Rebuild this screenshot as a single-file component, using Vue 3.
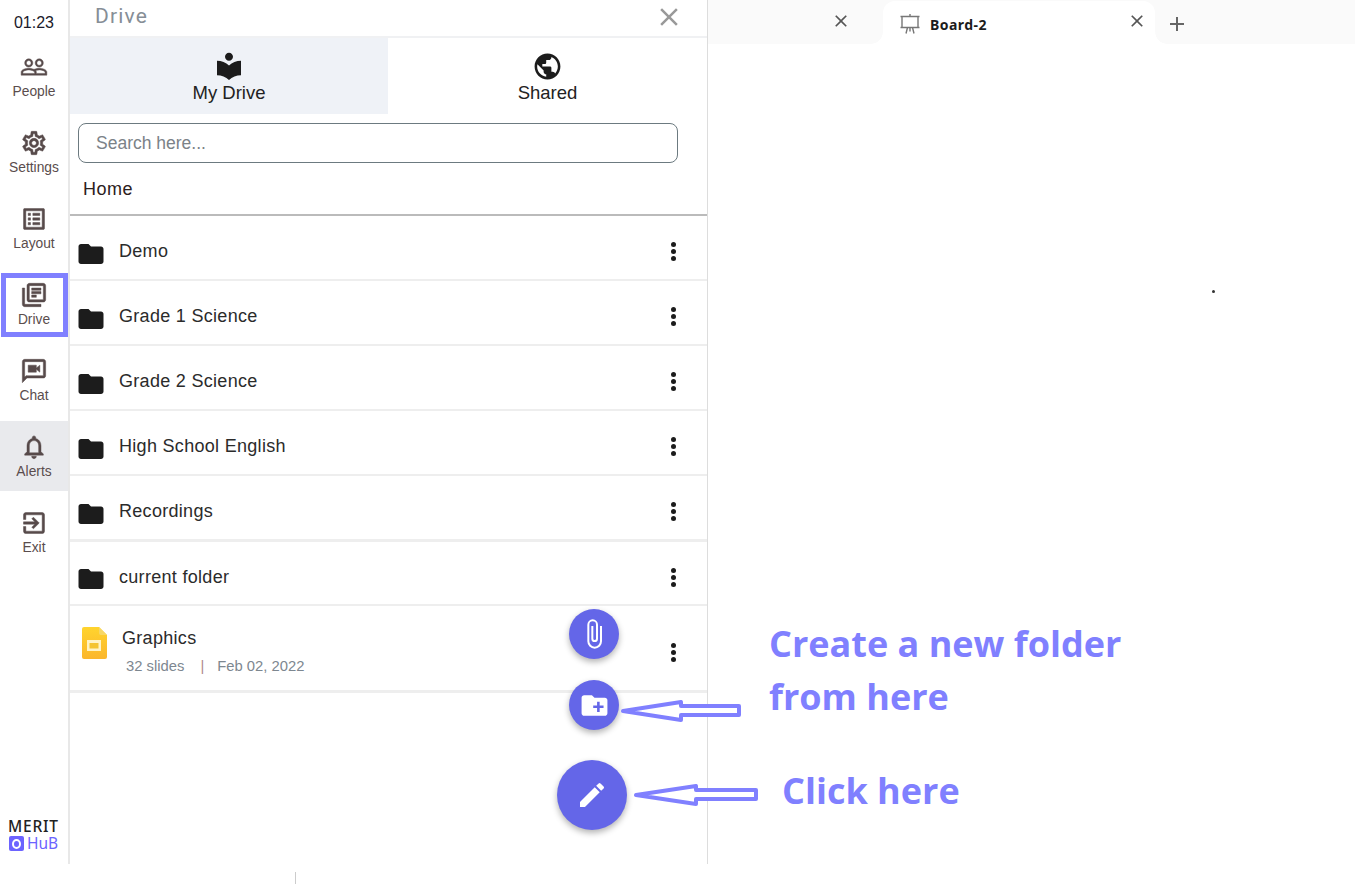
<script setup>
const nav = [
  { label: 'People', d: 'M16.5 13c-1.2 0-3.07.34-4.5 1-1.43-.67-3.3-1-4.5-1C5.33 13 1 14.08 1 16.25V19h22v-2.75c0-2.17-4.33-3.25-6.5-3.25zm-4 4.5h-10v-1.25c0-.54 2.56-1.75 5-1.75s5 1.21 5 1.75v1.25zm9 0H14v-1.25c0-.46-.2-.86-.52-1.22.88-.3 1.96-.53 3.02-.53 2.44 0 5 1.21 5 1.75v1.25zM7.5 12c1.93 0 3.5-1.57 3.5-3.5S9.43 5 7.5 5 4 6.57 4 8.5 5.57 12 7.5 12zm0-5.5c1.1 0 2 .9 2 2s-.9 2-2 2-2-.9-2-2 .9-2 2-2zm9 5.5c1.93 0 3.5-1.57 3.5-3.5S18.43 5 16.5 5 13 6.57 13 8.5s1.57 3.5 3.5 3.5zm0-5.5c1.1 0 2 .9 2 2s-.9 2-2 2-2-.9-2-2 .9-2 2-2z' },
  { label: 'Settings', d: 'M19.43 12.98c.04-.32.07-.64.07-.98 0-.34-.03-.66-.07-.98l2.11-1.65c.19-.15.24-.42.12-.64l-2-3.46c-.09-.16-.26-.25-.44-.25-.06 0-.12.01-.17.03l-2.49 1c-.52-.4-1.08-.73-1.69-.98l-.38-2.65C14.46 2.18 14.25 2 14 2h-4c-.25 0-.46.18-.49.42l-.38 2.65c-.61.25-1.17.59-1.69.98l-2.49-1c-.06-.02-.12-.03-.18-.03-.17 0-.34.09-.43.25l-2 3.46c-.13.22-.07.49.12.64l2.11 1.65c-.04.32-.07.65-.07.98 0 .33.03.66.07.98l-2.11 1.65c-.19.15-.24.42-.12.64l2 3.46c.09.16.26.25.44.25.06 0 .12-.01.17-.03l2.49-1c.52.4 1.08.73 1.69.98l.38 2.65c.03.24.24.42.49.42h4c.25 0 .46-.18.49-.42l.38-2.65c.61-.25 1.17-.59 1.69-.98l2.49 1c.06.02.12.03.18.03.17 0 .34-.09.43-.25l2-3.46c.12-.22.07-.49-.12-.64l-2.11-1.65zm-1.98-1.71c.04.31.05.52.05.73 0 .21-.02.43-.05.73l-.14 1.13.89.7 1.08.84-.7 1.21-1.27-.51-1.04-.42-.9.68c-.43.32-.84.56-1.25.73l-1.06.43-.16 1.13-.2 1.35h-1.4l-.19-1.35-.16-1.13-1.06-.43c-.43-.18-.83-.41-1.23-.71l-.91-.7-1.06.43-1.27.51-.7-1.21 1.08-.84.89-.7-.14-1.13c-.03-.31-.05-.54-.05-.74s.02-.43.05-.73l.14-1.13-.89-.7-1.08-.84.7-1.21 1.27.51 1.04.42.9-.68c.43-.32.84-.56 1.25-.73l1.06-.43.16-1.13.2-1.35h1.39l.19 1.35.16 1.13 1.06.43c.43.18.83.41 1.23.71l.91.7 1.06-.43 1.27-.51.7 1.21-1.07.85-.89.7.14 1.13zM12 8c-2.21 0-4 1.79-4 4s1.79 4 4 4 4-1.79 4-4-1.79-4-4-4zm0 6c-1.1 0-2-.9-2-2s.9-2 2-2 2 .9 2 2-.9 2-2 2z' },
  { label: 'Layout', d: 'M19 5v14H5V5h14m1.1-2H3.9c-.5 0-.9.4-.9.9v16.2c0 .4.4.9.9.9h16.2c.4 0 .9-.5.9-.9V3.9c0-.5-.5-.9-.9-.9zM11 7h6v2h-6V7zm0 4h6v2h-6v-2zm0 4h6v2h-6zM7 7h2v2H7zm0 4h2v2H7zm0 4h2v2H7z' },
  { label: 'Drive', d: 'M4 6H2v14c0 1.1.9 2 2 2h14v-2H4V6zm16-4H8c-1.1 0-2 .9-2 2v12c0 1.1.9 2 2 2h12c1.1 0 2-.9 2-2V4c0-1.1-.9-2-2-2zm0 14H8V4h12v12zM10 9h8v2h-8zm0 3h4v2h-4zm0-6h8v2h-8z' },
  { label: 'Chat', d: 'M20 2H4c-1.1 0-2 .9-2 2v18l4-4h14c1.1 0 2-.9 2-2V4c0-1.1-.9-2-2-2zm0 14H5.17L4 17.17V4h16v12zM7 7h7v2.4L17 7v6l-3-2.4V13H7z' },
  { label: 'Alerts', active: true, d: 'M12 22c1.1 0 2-.9 2-2h-4c0 1.1.9 2 2 2zm6-6v-5c0-3.07-1.63-5.64-4.5-6.32V4c0-.83-.67-1.5-1.5-1.5s-1.5.67-1.5 1.5v.68C7.64 5.36 6 7.92 6 11v5l-2 2v1h16v-1l-2-2zm-2 1H8v-6c0-2.48 1.51-4.5 4-4.5s4 2.02 4 4.5v6z' },
  { label: 'Exit', d: 'M10.09 15.59L11.5 17l5-5-5-5-1.41 1.41L12.67 11H3v2h9.67l-2.58 2.59zM19 3H5c-1.11 0-2 .9-2 2v4h2V5h14v14H5v-4H3v4c0 1.1.89 2 2 2h14c1.1 0 2-.9 2-2V5c0-1.1-.9-2-2-2z' }
]
const folders = ['Demo', 'Grade 1 Science', 'Grade 2 Science', 'High School English', 'Recordings', 'current folder']
</script>

<template>
  <div class="page">
    <div class="main">
      <aside class="rail">
        <div class="time">01:23</div>
        <div v-for="n in nav" :key="n.label" class="nav" :class="{ on: n.active }">
          <svg class="nav-ic" viewBox="0 0 24 24"><path :d="n.d" /></svg>
          <span>{{ n.label }}</span>
        </div>
        <div class="logo">
          <div class="merit">MERIT</div>
          <div class="hub"><span class="q"><i></i></span><span>HuB</span></div>
        </div>
        <div class="mark"></div>
      </aside>

      <section class="panel">
        <header class="head">
          <span class="title">Drive</span>
          <svg class="close" viewBox="0 0 24 24"><path d="M19 6.41L17.59 5 12 10.59 6.41 5 5 6.41 10.59 12 5 17.59 6.41 19 12 13.41 17.59 19 19 17.59 13.41 12z" /></svg>
        </header>
        <div class="tabs">
          <div class="tab sel">
            <svg class="book" viewBox="0 0 24 24"><path d="M12 11.55C9.64 9.35 6.48 8 3 8v11c3.48 0 6.64 1.35 9 3.55 2.36-2.19 5.52-3.55 9-3.55V8c-3.48 0-6.64 1.35-9 3.55zM12 8c1.66 0 3-1.34 3-3s-1.34-3-3-3-3 1.34-3 3 1.34 3 3 3z" /></svg>
            <span>My Drive</span>
          </div>
          <div class="tab">
            <svg class="globe" viewBox="0 0 24 24"><path d="M12 2C6.48 2 2 6.48 2 12s4.48 10 10 10 10-4.48 10-10S17.52 2 12 2zm-1 17.93c-3.95-.49-7-3.85-7-7.93 0-.62.08-1.21.21-1.79L9 15v1c0 1.1.9 2 2 2v1.93zm6.9-2.54c-.26-.81-1-1.39-1.9-1.39h-1v-3c0-.55-.45-1-1-1H8v-2h2c.55 0 1-.45 1-1V7h2c1.1 0 2-.9 2-2v-.41c2.93 1.19 5 4.06 5 7.41 0 2.08-.8 3.97-2.1 5.39z" /></svg>
            <span>Shared</span>
          </div>
        </div>
        <div class="search">Search here...</div>
        <div class="crumb">Home</div>
        <div class="list">
          <div v-for="f in folders" :key="f" class="row">
            <svg class="folder" viewBox="0 0 24 24"><path d="M10 4H4c-1.100 0-1.990.900-1.990 2L2 18c0 1.100.900 2 2 2h16c1.100 0 2-.900 2-2V8c0-1.100-.900-2-2-2h-8l-2-2z" /></svg>
            <span class="name">{{ f }}</span>
            <span class="dots"><i></i><i></i><i></i></span>
          </div>
          <div class="row file">
            <svg class="slides" viewBox="0 0 25 32">
              <defs><linearGradient id="sg" x1="0" y1="0" x2="0" y2="1"><stop offset="0" stop-color="#ffd42e" /><stop offset="1" stop-color="#fbb62c" /></linearGradient></defs>
              <path fill="url(#sg)" d="M2 0h15l8 8v22a2 2 0 0 1-2 2H2a2 2 0 0 1-2-2V2a2 2 0 0 1 2-2z" />
              <path fill="#f7d766" d="M17 0l8 8h-6a2 2 0 0 1-2-2z" />
              <path fill="#fff3c4" d="M5 13h14v11H5z" />
              <path fill="#f4c430" d="M7.500 16h9v5.500h-9z" />
            </svg>
            <div class="meta">
              <div class="name">Graphics</div>
              <div class="sub"><span>32 slides</span><b>|</b><span>Feb 02, 2022</span></div>
            </div>
            <span class="dots"><i></i><i></i><i></i></span>
          </div>
        </div>

        <button class="fab small clip">
          <svg viewBox="0 0 24 24"><path d="M16.500 6v11.500a4 4 0 0 1-8 0V5a2.500 2.500 0 0 1 5 0v10.500a1 1 0 0 1-2 0V6H10v9.500a2.500 2.500 0 0 0 5 0V5a4 4 0 0 0-8 0v12.500a5.500 5.500 0 0 0 11 0V6z" /></svg>
        </button>
        <button class="fab small add">
          <svg viewBox="0 0 24 24"><path d="M20 6h-8l-2-2H4c-1.110 0-1.990.890-1.990 2L2 18c0 1.110.890 2 2 2h16c1.110 0 2-.890 2-2V8c0-1.110-.890-2-2-2zm-1 8h-3v3h-2v-3h-3v-2h3V9h2v3h3v2z" /></svg>
        </button>
        <button class="fab big">
          <svg viewBox="0 0 24 24"><path d="M3 17.250V21h3.750L17.810 9.940l-3.750-3.750L3 17.250zM20.710 7.040a.996.996 0 0 0 0-1.410l-2.340-2.340a.996.996 0 0 0-1.410 0l-1.830 1.830 3.750 3.750 1.830-1.830z" /></svg>
        </button>
      </section>

      <section class="board">
        <nav class="strip">
          <div class="t first">
            <svg class="x" viewBox="0 0 24 24"><path d="M19 6.410L17.590 5 12 10.590 6.410 5 5 6.410 10.590 12 5 17.590 6.410 19 12 13.410 17.590 19 19 17.590 13.410 12z" /></svg>
          </div>
          <div class="t cur">
            <svg class="easel" viewBox="0 0 20 22" fill="none" stroke="#777" stroke-width="1.400"><path d="M2 3.500h16v11H2zM.500 3.500h19M.500 14.500h19M6 20.500l1.500-6M14 20.500l-1.500-6M10 14.500v4M10 3.500V1" /></svg>
            <span class="bname">Board-2</span>
            <svg class="x" viewBox="0 0 24 24"><path d="M19 6.410L17.590 5 12 10.590 6.410 5 5 6.410 10.590 12 5 17.590 6.410 19 12 13.410 17.590 19 19 17.590 13.410 12z" /></svg>
          </div>
          <svg class="plus" viewBox="0 0 24 24"><path d="M19 13h-6v6h-2v-6H5v-2h6V5h2v6h6v2z" /></svg>
        </nav>
        <i class="speck"></i>
      </section>
    </div>
    <div class="foot"><i></i></div>

    <svg class="arrow a1" viewBox="0 0 120 24"><path d="M2 11 60 2V6H118V15H60V20z" /></svg>
    <svg class="arrow a2" viewBox="0 0 124 24"><path d="M2 11 62 2V6H122V15H62V20z" /></svg>
    <div class="note n1">Create a new folder<br />from here</div>
    <div class="note n2">Click here</div>
  </div>
</template>

<style>
html, body { margin: 0; background: #fff; }
</style>

<style scoped>
.page { position: relative; width: 1355px; height: 884px; overflow: hidden; font-family: "Liberation Sans", Arial, sans-serif; color: #222; }
.main { display: flex; height: 864px; }
.rail { position: relative; width: 70px; box-sizing: border-box; flex: none; border-right: 2px solid #e8e8e8; display: flex; flex-direction: column; }
.time { height: 41px; padding-top: 14px; box-sizing: border-box; text-align: center; font-size: 16px; line-height: 18px; color: #1a1a2a; }
.nav { height: 70px; margin-bottom: 6px; display: flex; flex-direction: column; align-items: center; padding-top: 12px; box-sizing: border-box; font-size: 13.800px; line-height: 16px; color: #5a4d4d; }
.nav.on { background: #e9eaed; }
.nav-ic { width: 28px; height: 28px; fill: #574a4a; stroke: #574a4a; stroke-width: .4; margin-bottom: 3px; }
.logo { margin-top: auto; padding: 0 0 12px 8px; }
.merit { font-family: "Noto Sans", sans-serif; font-weight: 500; font-size: 15.500px; line-height: 18px; letter-spacing: .8px; margin-top: -1px; color: #222; }
.hub { display: flex; align-items: center; gap: 3px; margin-left: 1px; font-family: "Noto Sans", sans-serif; font-size: 15.500px; line-height: 17px; color: #6c63ff; }
.q { width: 15px; height: 15px; background: #6c63ff; border-radius: 2px; display: flex; align-items: center; justify-content: center; }
.q i { width: 5px; height: 6px; border: 2px solid #fff; border-radius: 50%; }
.mark { position: absolute; left: 1px; top: 273px; width: 67px; height: 64px; border: 5px solid #8080ff; box-sizing: border-box; }

.panel { position: relative; width: 637px; flex: none; border-right: 1px solid #ddd; }
.head { height: 38px; box-sizing: border-box; border-bottom: 2px solid #f0f1f3; display: flex; justify-content: space-between; padding: 0 23px 0 25px; align-items: flex-start; }
.title { font-family: Roboto, sans-serif; font-size: 21px; line-height: 32px; letter-spacing: 1.200px; color: #868e96; }
.close { width: 30px; height: 30px; margin-top: 2px; fill: #999; }
.tabs { display: flex; height: 76px; }
.tab { flex: 1; display: flex; flex-direction: column; align-items: center; font-size: 18.500px; line-height: 22px; color: #222; padding-top: 13px; box-sizing: border-box; }
.tab.sel { flex: none; width: 318px; background: #eff2f7; }
.book { width: 32px; height: 32px; margin: -1px 0 0; fill: #1c1c1c; }
.globe { width: 31px; height: 31px; fill: #1c1c1c; }
.search { margin: 9px 29px 0 8px; height: 40px; box-sizing: border-box; border: 1px solid #6c7a80; border-radius: 8px; padding: 0 17px; font-size: 17.500px; line-height: 38px; color: #7b8288; }
.crumb { height: 53px; padding: 14px 0 0 13px; box-sizing: border-box; font-size: 18px; line-height: 24px; letter-spacing: .5px; color: #2b2020; border-bottom: 2px solid #bbb; }
.row { height: 65px; display: flex; align-items: center; box-sizing: border-box; border-bottom: 2px solid #eee; padding: 8px 0 0 6px; }
.row:nth-child(5) { height: 66px; border-bottom-width: 3px; }
.row:nth-child(6) { height: 64px; }
.folder { width: 30px; height: 30px; fill: #1c1c1c; margin-top: 4px; }
.name { margin: -1px 0 0 13px; font-size: 18px; line-height: 24px; letter-spacing: .3px; color: #2b2b2b; flex: 1; }
.dots { width: 6px; margin-right: 30px; display: flex; flex-direction: column; gap: 2px; }
.dots i { width: 5px; height: 5px; border-radius: 50%; background: #1c1c1c; }
.row.file { height: 87px; padding-left: 12px; border-bottom-width: 3px; }
.slides { width: 25px; height: 32px; margin-top: -18px; }
.meta { flex: 1; margin-left: 15px; margin-top: -2px; }
.meta .name { margin: 0; }
.sub { font-size: 14.800px; line-height: 20px; margin: 6px 0 0 4px; color: #7d8790; display: flex; }
.sub b { font-weight: 400; color: #b08a88; margin: 0 13px 0 16px; }

.fab { position: absolute; border: none; padding: 0; border-radius: 50%; background: #6466e8; box-shadow: 0 3px 6px rgba(0, 0, 0, .3); display: flex; align-items: center; justify-content: center; }
.fab svg { fill: #fff; }
.small { width: 50px; height: 50px; left: 499px; }
.small svg { width: 32px; height: 32px; }
.clip { top: 609px; }
.add { top: 680px; }
.add svg { width: 31px; height: 31px; }
.big { width: 70px; height: 70px; left: 487px; top: 760px; }
.big svg { width: 32px; height: 32px; }

.board { position: relative; flex: 1; }
.strip { height: 44px; background: #fafafa; display: flex; align-items: flex-start; padding-top: 1px; box-sizing: border-box; }
.t { height: 43px; display: flex; align-items: center; }
.first { width: 175px; justify-content: flex-end; padding-right: 32px; box-sizing: border-box; }
.cur { position: relative; width: 272px; box-sizing: border-box; padding: 0 8px 0 17px; background: #fff; border-radius: 12px 12px 0 0; }
.cur::before, .cur::after { content: ""; position: absolute; bottom: 0; width: 12px; height: 12px; background: radial-gradient(circle at 0 0, #fafafa 11.500px, #fff 12px); }
.cur::before { left: -12px; }
.cur::after { right: -12px; background: radial-gradient(circle at 100% 0, #fafafa 11.500px, #fff 12px); }
.x { width: 20px; height: 20px; fill: #555; margin-top: -3px; }
.easel { width: 20px; height: 22px; margin-top: 3px; }
.bname { flex: 1; margin: 3px 0 0 10px; font-family: "Noto Sans", sans-serif; font-weight: 700; font-size: 14px; letter-spacing: .45px; color: #1c1c1c; }
.plus { width: 24px; height: 24px; margin: 11px 0 0 10px; fill: #666; }
.speck { position: absolute; left: 504px; top: 290px; width: 3px; height: 3px; background: #333; border-radius: 50%; }

.foot { height: 20px; padding: 8px 0 0 295px; box-sizing: border-box; }
.foot i { display: block; width: 1px; height: 12px; background: #ccc; }

.arrow { position: absolute; fill: #fff; stroke: #8080ff; stroke-width: 4; stroke-linejoin: round; }
.a1 { left: 621px; top: 700px; width: 120px; height: 24px; }
.a2 { left: 634px; top: 784px; width: 124px; height: 24px; }
.note { position: absolute; font-family: "Open Sans", sans-serif; font-weight: 700; font-size: 36px; line-height: 53px; color: #8080ff; }
.n1 { left: 769px; top: 617px; }
.n2 { left: 782px; top: 764px; }
</style>
